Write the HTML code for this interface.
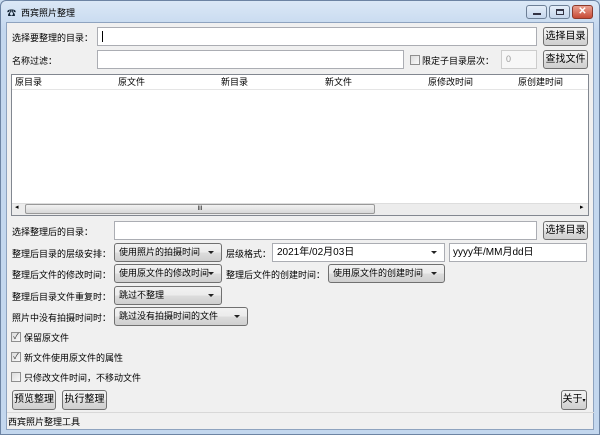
<!DOCTYPE html>
<html><head><meta charset="utf-8"><style>
*{box-sizing:border-box;margin:0;padding:0}
body{width:600px;height:435px;overflow:hidden;background:#c9dcf0;font-family:"Liberation Sans","Noto Sans CJK SC",sans-serif;font-size:9px;color:#000;position:relative}
.a{position:absolute;white-space:nowrap}
.frame{position:absolute;left:0;top:0;width:600px;height:435px;border:1px solid #6d84a3;border-radius:6px 6px 0 0;background:linear-gradient(#dbe8f6,#c3d7ee 30px,#c3d7ee)}
.client{position:absolute;left:6px;top:22px;width:588px;height:408px;background:#f0f0f0;border:1px solid #8ea3bf}
.in{position:absolute;background:#fff;border:1px solid #abadb3;height:19px}
.btn{position:absolute;border:1px solid #707070;border-radius:3px;background:linear-gradient(#f2f2f2,#ebebeb 50%,#dddddd 50%,#cfcfcf);text-align:center;line-height:17px;height:19px;font-size:10px}
.cb{position:absolute;width:10px;height:10px;border:1px solid #8f8f8f;background:linear-gradient(135deg,#dcdcdc,#fafafa);font-size:8px;line-height:8px;text-align:center;color:#333}
.combo{position:absolute;height:19px;border:1px solid #707070;border-radius:3px;background:linear-gradient(#f2f2f2,#ebebeb 50%,#dddddd 50%,#cfcfcf);padding-left:4px;line-height:17px;overflow:hidden}
.combo:after{content:"";position:absolute;right:7px;top:7px;border:3px solid transparent;border-top:3px solid #222}
.wb{position:absolute;top:5px;height:14px;border:1px solid #6d7f96;border-radius:3px;background:linear-gradient(#e5eef9,#c5d6ec)}
</style></head><body>
<div class="frame"></div>
<div class="a" style="left:7px;top:6px;font-size:9px;font-weight:bold;color:#123">☎</div>
<div class="a" style="left:21px;top:6px">西宾照片整理</div>
<div class="wb" style="left:526px;width:21px"><div style="position:absolute;left:6px;top:7px;width:8px;height:2px;background:#334"></div></div>
<div class="wb" style="left:549px;width:21px"><div style="position:absolute;left:6px;top:3px;width:8px;height:6px;border:1px solid #334;border-top-width:2px"></div></div>
<div class="wb" style="left:572px;width:21px;background:linear-gradient(#e9a090,#c74a35);border-color:#8b3a2c;color:#fff;text-align:center;line-height:12px;font-weight:bold;font-size:10px">✕</div>
<div class="client"></div>

<div class="a" style="left:12px;top:31px">选择要整理的目录：</div>
<div class="in" style="left:97px;top:27px;width:440px"><div style="position:absolute;left:4px;top:3px;width:1px;height:11px;background:#000"></div></div>
<div class="btn" style="left:543px;top:27px;width:45px">选择目录</div>

<div class="a" style="left:12px;top:54px">名称过滤：</div>
<div class="in" style="left:97px;top:50px;width:307px"></div>
<div class="cb" style="left:410px;top:55px"></div>
<div class="a" style="left:422px;top:54px">限定子目录层次：</div>
<div class="in" style="left:501px;top:50px;width:36px;border-color:#ccc;background:#f7f7f7;color:#999;padding-left:4px;line-height:17px">0</div>
<div class="btn" style="left:543px;top:50px;width:45px">查找文件</div>

<div class="a" style="left:11px;top:74px;width:578px;height:142px;background:#fff;border:1px solid #828790"></div>
<div class="a" style="left:12px;top:75px;width:576px;height:15px;border-bottom:1px solid #e5e5e5;line-height:14px">
<span class="a" style="left:3px">原目录</span><span class="a" style="left:106px">原文件</span><span class="a" style="left:209px">新目录</span><span class="a" style="left:313px">新文件</span><span class="a" style="left:416px">原修改时间</span><span class="a" style="left:506px">原创建时间</span></div>
<div class="a" style="left:12px;top:203px;width:576px;height:12px;background:#ececec;border-top:1px solid #ddd"></div>
<div class="a" style="left:15px;top:203px;font-size:7px">◂</div>
<div class="a" style="left:580px;top:203px;font-size:7px">▸</div>
<div class="a" style="left:25px;top:204px;width:350px;height:10px;border:1px solid #999;border-radius:2px;background:linear-gradient(#f2f2f2,#d8d8d8);text-align:center;font-size:6px;line-height:8px">III</div>

<div class="a" style="left:12px;top:225px">选择整理后的目录：</div>
<div class="in" style="left:114px;top:221px;width:423px"></div>
<div class="btn" style="left:543px;top:221px;width:45px">选择目录</div>

<div class="a" style="left:12px;top:247px">整理后目录的层级安排：</div>
<div class="combo" style="left:114px;top:243px;width:108px">使用照片的拍摄时间</div>
<div class="a" style="left:226px;top:247px">层级格式：</div>
<div class="combo" style="left:272px;top:243px;width:173px;background:#fff;border-color:#abadb3;border-radius:0;font-size:10px">2021年/02月03日</div>
<div class="in" style="left:449px;top:243px;width:138px;padding-left:3px;line-height:17px;font-size:10px">yyyy年/MM月dd日</div>

<div class="a" style="left:12px;top:268px">整理后文件的修改时间：</div>
<div class="combo" style="left:114px;top:264px;width:108px">使用原文件的修改时间</div>
<div class="a" style="left:226px;top:268px">整理后文件的创建时间：</div>
<div class="combo" style="left:328px;top:264px;width:117px">使用原文件的创建时间</div>

<div class="a" style="left:12px;top:290px">整理后目录文件重复时：</div>
<div class="combo" style="left:114px;top:286px;width:108px">跳过不整理</div>

<div class="a" style="left:12px;top:311px">照片中没有拍摄时间时：</div>
<div class="combo" style="left:114px;top:307px;width:134px">跳过没有拍摄时间的文件</div>

<div class="cb" style="left:11px;top:332px">✓</div><div class="a" style="left:24px;top:331px">保留原文件</div>
<div class="cb" style="left:11px;top:352px">✓</div><div class="a" style="left:24px;top:351px">新文件使用原文件的属性</div>
<div class="cb" style="left:11px;top:372px"></div><div class="a" style="left:24px;top:371px">只修改文件时间，不移动文件</div>

<div class="btn" style="left:12px;top:390px;width:44px;height:20px;line-height:18px">预览整理</div>
<div class="btn" style="left:62px;top:390px;width:45px;height:20px;line-height:18px">执行整理</div>
<div class="btn" style="left:561px;top:390px;width:26px;height:20px;line-height:18px">关于<span style="font-size:6px">▾</span></div>

<div class="a" style="left:7px;top:412px;width:587px;height:18px;border-top:1px solid #d8d8d8;padding-left:1px;line-height:18px">西宾照片整理工具</div>
</body></html>
